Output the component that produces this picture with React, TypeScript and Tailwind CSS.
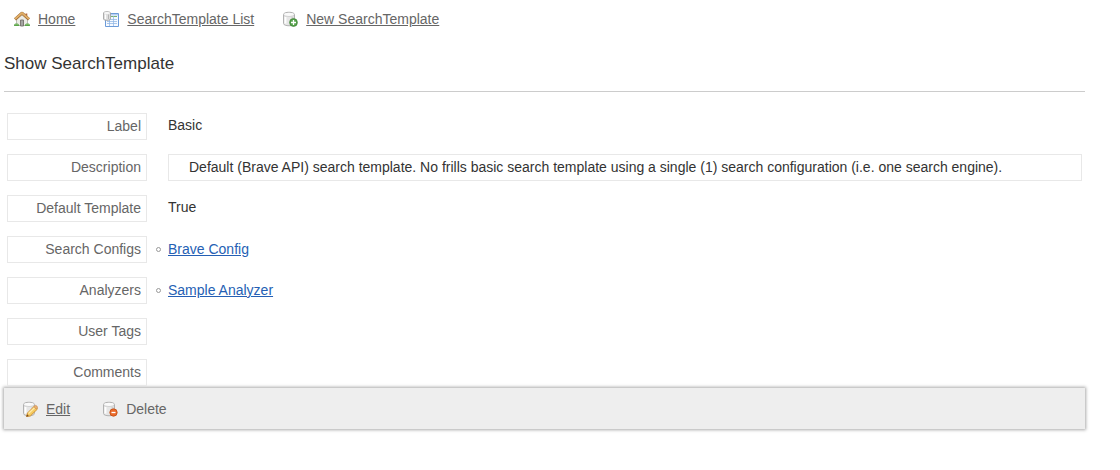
import type { ReactNode } from 'react';

function HouseIcon() {
  return (
    <svg className="size-4 shrink-0" viewBox="0 0 16 16" aria-hidden="true">
      <path d="M2.500 8 8 3l5.500 5v6.500h-11Z" fill="#ecece6" stroke="#a3a39c" strokeWidth=".7" />
      <path d="M11.500 2.500h1.800v3l-1.800-1Z" fill="#b8683c" />
      <path d="M1 8.300 8 2.200l7 6.100" fill="none" stroke="#9a6832" strokeWidth="3" strokeLinejoin="round" />
      <path d="M1 8 8 2l7 6" fill="none" stroke="#e0ae68" strokeWidth="1.900" strokeLinejoin="round" />
      <path d="M6.500 9h3v6h-3Z" fill="#a5a5a3" stroke="#75716c" strokeWidth=".9" />
      <path d="M0 15c0-2 1.200-3 2.500-2.300C4 12 5 13.500 5.300 15Z" fill="#5aa34a" />
      <path d="M10.700 15c.3-1.600 1.500-3 2.800-2.300C15 12 16 13.300 16 15Z" fill="#5aa34a" />
      <path d="M1 14c1-1 2-1 3-.3M12 14c1-1 2-1 3-.3" fill="none" stroke="#9bd07e" strokeWidth=".7" />
    </svg>
  );
}

function TableIcon() {
  return (
    <svg className="size-4 shrink-0" viewBox="0 0 16 16" aria-hidden="true">
      <path d="M2.500 2.500h13v13h-13Z" fill="#f5f9ff" stroke="#6c9bd8" />
      <path d="M3 3h12v1.500H3Z" fill="#b7d0f1" />
      <path d="M8 5.500h6" stroke="#79b36c" />
      <path d="M4 8.500h10M4 10.500h10M4 12.500h10" stroke="#a9c7eb" />
      <path d="M6.500 5v10M10.500 5v10" stroke="#8eb4e3" strokeWidth=".7" />
      <path d="M.5 2C.5.300 7.500.300 7.500 2v6c0 1.800-7 1.800-7 0Z" fill="#dedede" stroke="#9c9c9c" strokeWidth=".8" />
      <ellipse cx="4" cy="2" rx="3" ry="1" fill="#f8f8f8" />
      <path d="M2.500 3.500v4.500" stroke="#fff" strokeWidth="1.200" />
      <path d="M5.500 3.500v4.500" stroke="#b5b5b5" />
    </svg>
  );
}

function DatabaseIcon({ children }: { children: ReactNode }) {
  return (
    <svg className="size-4 shrink-0" viewBox="0 0 16 16" aria-hidden="true">
      <path d="M1.500 3.500c0-3 11-3 11 0v9c0 3-11 3-11 0Z" fill="#e6e6e6" stroke="#b2b2b2" />
      <path d="M2 5c2 1.200 8 1.200 10 0v-1.500H2Z" fill="#d2d2d2" />
      <ellipse cx="7" cy="3.300" rx="4.900" ry="1.600" fill="#fafafa" />
      <path d="M3.500 6v6.500" stroke="#fff" strokeWidth="1.800" />
      <path d="M10.500 6v7.500" stroke="#cecece" strokeWidth="2" />
      {children}
    </svg>
  );
}

function AddMark() {
  return (
    <>
      <circle cx="11.500" cy="11.500" r="3.900" fill="#55a34b" stroke="#3f8035" strokeWidth=".7" />
      <path d="M11.500 9v5M9 11.500h5" stroke="#fff" strokeWidth="1.300" />
    </>
  );
}

function DeleteMark() {
  return (
    <>
      <circle cx="11.500" cy="11.500" r="3.700" fill="#ec6a2a" stroke="#c04c12" strokeWidth=".8" />
      <path d="M9.500 11.500h4" stroke="#fff" strokeWidth="1.300" />
    </>
  );
}

function PencilMark() {
  return (
    <>
      <path d="m4.500 15.500 1-3.500 7-7 3 3-7.200 7Z" fill="#f6cb60" stroke="#cd8c2c" strokeWidth=".9" strokeLinejoin="round" />
      <path d="m6.500 12.500 6.500-6.300" stroke="#ffebaa" strokeWidth="1.300" />
      <path d="m11.800 5.700 1.400-1.300c.7-.6 3 1.600 2.300 2.400l-1.300 1.400Z" fill="#e9ae70" stroke="#c08345" strokeWidth=".5" />
      <path d="m4.300 15.700.8-2.400 1.700 1.600Z" fill="#7a4c22" />
    </>
  );
}

function NavLink({ icon, children }: { icon: ReactNode; children: ReactNode }) {
  return (
    <a href="#" className="flex items-center gap-2 text-[#666]">
      {icon}
      <span className="underline">{children}</span>
    </a>
  );
}

function Property({ label, children }: { label: string; children?: ReactNode }) {
  return (
    <div className="flex gap-[21px]">
      <dt className="h-[27px] w-[140px] shrink-0 border border-[#e8e8e8] px-[5px] text-right leading-[25px] text-[#666]">
        {label}
      </dt>
      <dd className="min-w-0 flex-1">{children}</dd>
    </div>
  );
}

function LinkedItem({ children }: { children: ReactNode }) {
  return (
    <ul className="-ml-3">
      <li className="flex items-center gap-[7px] leading-[27px]">
        <span className="size-[5px] rounded-full border border-[#999]" />
        <a href="#" className="text-[#255fb4] underline">
          {children}
        </a>
      </li>
    </ul>
  );
}

export default function App() {
  return (
    <div className="bg-white pr-[35px] pb-10 pl-1 font-['Liberation_Sans',Arial,sans-serif] text-sm text-[#333]">
      <nav className="flex h-[38px] items-center gap-7 pl-[10px]">
        <NavLink icon={<HouseIcon />}>Home</NavLink>
        <NavLink icon={<TableIcon />}>SearchTemplate List</NavLink>
        <NavLink icon={<DatabaseIcon><AddMark /></DatabaseIcon>}>New SearchTemplate</NavLink>
      </nav>
      <main>
        <h1 className="h-[54px] border-b border-[#ccc] pt-[14px] text-[17px] leading-6">Show SearchTemplate</h1>
        <dl className="mt-[21px] flex flex-col gap-[14px] px-[3px]">
          <Property label="Label">
            <p className="leading-6">Basic</p>
          </Property>
          <Property label="Description">
            <p className="border border-[#e8e8e8] px-5 leading-[25px]">
              Default (Brave API) search template. No frills basic search template using a single (1) search
              configuration (i.e. one search engine).
            </p>
          </Property>
          <Property label="Default Template">
            <p className="leading-6">True</p>
          </Property>
          <Property label="Search Configs">
            <LinkedItem>Brave Config</LinkedItem>
          </Property>
          <Property label="Analyzers">
            <LinkedItem>Sample Analyzer</LinkedItem>
          </Property>
          <Property label="User Tags" />
          <Property label="Comments" />
        </dl>
        <div className="mt-[2px] flex h-[41px] items-center gap-8 bg-[#eee] pl-[18px] shadow-[0_0_3px_1px_#aaa]">
          <NavLink icon={<DatabaseIcon><PencilMark /></DatabaseIcon>}>Edit</NavLink>
          <button type="button" className="flex items-center gap-2 text-[#666]">
            <DatabaseIcon><DeleteMark /></DatabaseIcon>
            Delete
          </button>
        </div>
      </main>
    </div>
  );
}
